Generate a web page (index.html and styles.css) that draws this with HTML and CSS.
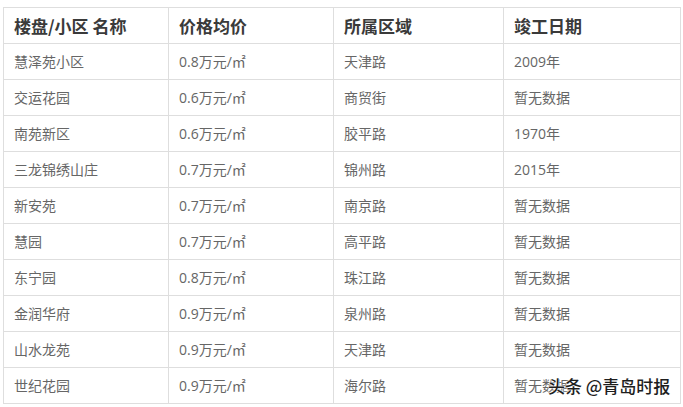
FILE: index.html
```html
<!DOCTYPE html>
<html lang="zh">
<head>
<meta charset="utf-8">
<link rel="stylesheet" href="styles.css">
</head>
<body>
<div class="page">
<table class="data">
<colgroup><col class="c1"><col class="c2"><col class="c3"><col class="c4"></colgroup>
<thead>
<tr><th>楼盘/小区 名称</th><th>价格均价</th><th>所属区域</th><th>竣工日期</th></tr>
</thead>
<tbody>
<tr><td>慧泽苑小区</td><td>0.8万元/㎡</td><td>天津路</td><td>2009年</td></tr>
<tr><td>交运花园</td><td>0.6万元/㎡</td><td>商贸街</td><td>暂无数据</td></tr>
<tr><td>南苑新区</td><td>0.6万元/㎡</td><td>胶平路</td><td>1970年</td></tr>
<tr><td>三龙锦绣山庄</td><td>0.7万元/㎡</td><td>锦州路</td><td>2015年</td></tr>
<tr><td>新安苑</td><td>0.7万元/㎡</td><td>南京路</td><td>暂无数据</td></tr>
<tr><td>慧园</td><td>0.7万元/㎡</td><td>高平路</td><td>暂无数据</td></tr>
<tr><td>东宁园</td><td>0.8万元/㎡</td><td>珠江路</td><td>暂无数据</td></tr>
<tr><td>金润华府</td><td>0.9万元/㎡</td><td>泉州路</td><td>暂无数据</td></tr>
<tr><td>山水龙苑</td><td>0.9万元/㎡</td><td>天津路</td><td>暂无数据</td></tr>
<tr><td>世纪花园</td><td>0.9万元/㎡</td><td>海尔路</td><td>暂无数据</td></tr>
</tbody>
</table>
<div class="watermark">头条 @青岛时报</div>
</div>
</body>
</html>
```
FILE: styles.css
```css
html, body {
  margin: 0;
  padding: 0;
  background: #fff;
}
.page {
  position: relative;
  width: 683px;
  height: 407px;
  overflow: hidden;
  padding: 7px 0 0 3px;
  box-sizing: border-box;
}
.data {
  border-collapse: collapse;
  table-layout: fixed;
  width: 677px;
  font-family: "Noto Sans CJK SC", "Microsoft YaHei", sans-serif;
}
.c1 { width: 165px; }
.c2 { width: 165px; }
.c3 { width: 170px; }
.c4 { width: 177px; }
.data th, .data td {
  border: 1px solid #dedede;
  height: 36px;
  padding: 0 10px;
  text-align: left;
  vertical-align: middle;
  box-sizing: border-box;
  white-space: nowrap;
  line-height: 20px;
}
.data th {
  font-size: 17px;
  font-weight: bold;
  color: #3a3a3a;
}
.data td {
  font-family: "Open Sans", "Noto Sans CJK SC", sans-serif;
  font-size: 14px;
  color: #666;
}
.watermark {
  position: absolute;
  left: 548px;
  top: 373px;
  font-family: "Noto Sans CJK SC", sans-serif;
  font-size: 17px;
  font-weight: 500;
  color: #1e1e1e;
  text-shadow: 0 0 2px #fff, 0 0 2px #fff, 0 0 1px #fff;
  white-space: nowrap;
}
```
